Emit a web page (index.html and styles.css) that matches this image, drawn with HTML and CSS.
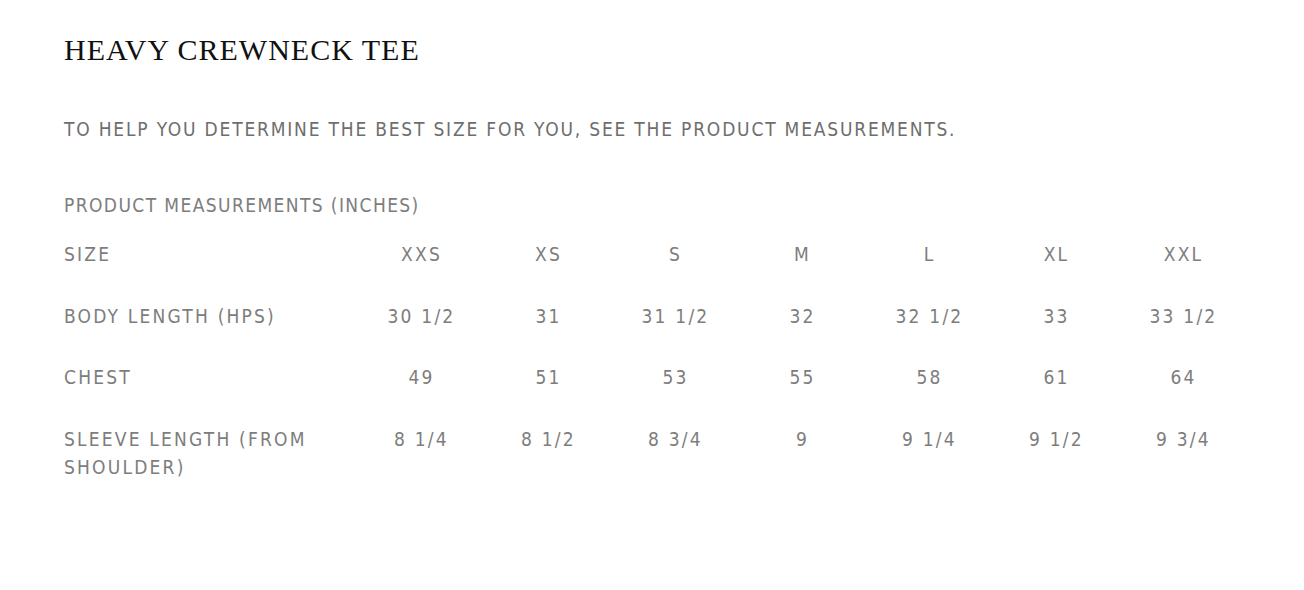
FILE: index.html
```html
<!DOCTYPE html>
<html>
<head>
<meta charset="utf-8">
<link rel="stylesheet" href="styles.css">
</head>
<body>
<main class="page">
  <h1 class="title">HEAVY CREWNECK TEE</h1>
  <p class="intro">TO HELP YOU DETERMINE THE BEST SIZE FOR YOU, SEE THE PRODUCT MEASUREMENTS.</p>
  <h2 class="caption">PRODUCT MEASUREMENTS (INCHES)</h2>
  <div class="table">
    <div class="row">
      <div class="label">SIZE</div>
      <div class="cell">XXS</div><div class="cell">XS</div><div class="cell">S</div><div class="cell">M</div><div class="cell">L</div><div class="cell">XL</div><div class="cell">XXL</div>
    </div>
    <div class="row">
      <div class="label">BODY LENGTH (HPS)</div>
      <div class="cell">30 1/2</div><div class="cell">31</div><div class="cell">31 1/2</div><div class="cell">32</div><div class="cell">32 1/2</div><div class="cell">33</div><div class="cell">33 1/2</div>
    </div>
    <div class="row">
      <div class="label">CHEST</div>
      <div class="cell">49</div><div class="cell">51</div><div class="cell">53</div><div class="cell">55</div><div class="cell">58</div><div class="cell">61</div><div class="cell">64</div>
    </div>
    <div class="row">
      <div class="label">SLEEVE LENGTH (FROM SHOULDER)</div>
      <div class="cell">8 1/4</div><div class="cell">8 1/2</div><div class="cell">8 3/4</div><div class="cell">9</div><div class="cell">9 1/4</div><div class="cell">9 1/2</div><div class="cell">9 3/4</div>
    </div>
  </div>
</main>
</body>
</html>
```

FILE: styles.css
```css
html, body {
  margin: 0;
  padding: 0;
  background: #ffffff;
}

.page {
  padding: 32px 64px 0 64px;
  font-family: "DejaVu Sans Condensed", "Liberation Sans", sans-serif;
}

.title {
  margin: 0;
  font-family: "Liberation Serif", serif;
  font-weight: normal;
  font-size: 30px;
  line-height: 36px;
  letter-spacing: 1px;
  color: #111111;
}

.intro {
  margin: 47px 0 0 0;
  font-size: 19px;
  line-height: 28px;
  letter-spacing: 1.8px;
  color: #6e6e6e;
}

.caption {
  margin: 48px 0 0 0;
  font-weight: normal;
  font-size: 19px;
  line-height: 28px;
  letter-spacing: 1.4px;
  color: #7d7d7d;
}

.table {
  margin-top: 7px;
  display: flex;
  flex-direction: column;
  width: 1183px;
}

.row {
  display: grid;
  grid-template-columns: 294px repeat(7, 127px);
  padding: 14px 0 19.5px 0;
  font-size: 19px;
  line-height: 28px;
  letter-spacing: 2.2px;
  color: #7d7d7d;
}

.label {
  padding-right: 40px;
}

.cell {
  text-align: center;
}
```
